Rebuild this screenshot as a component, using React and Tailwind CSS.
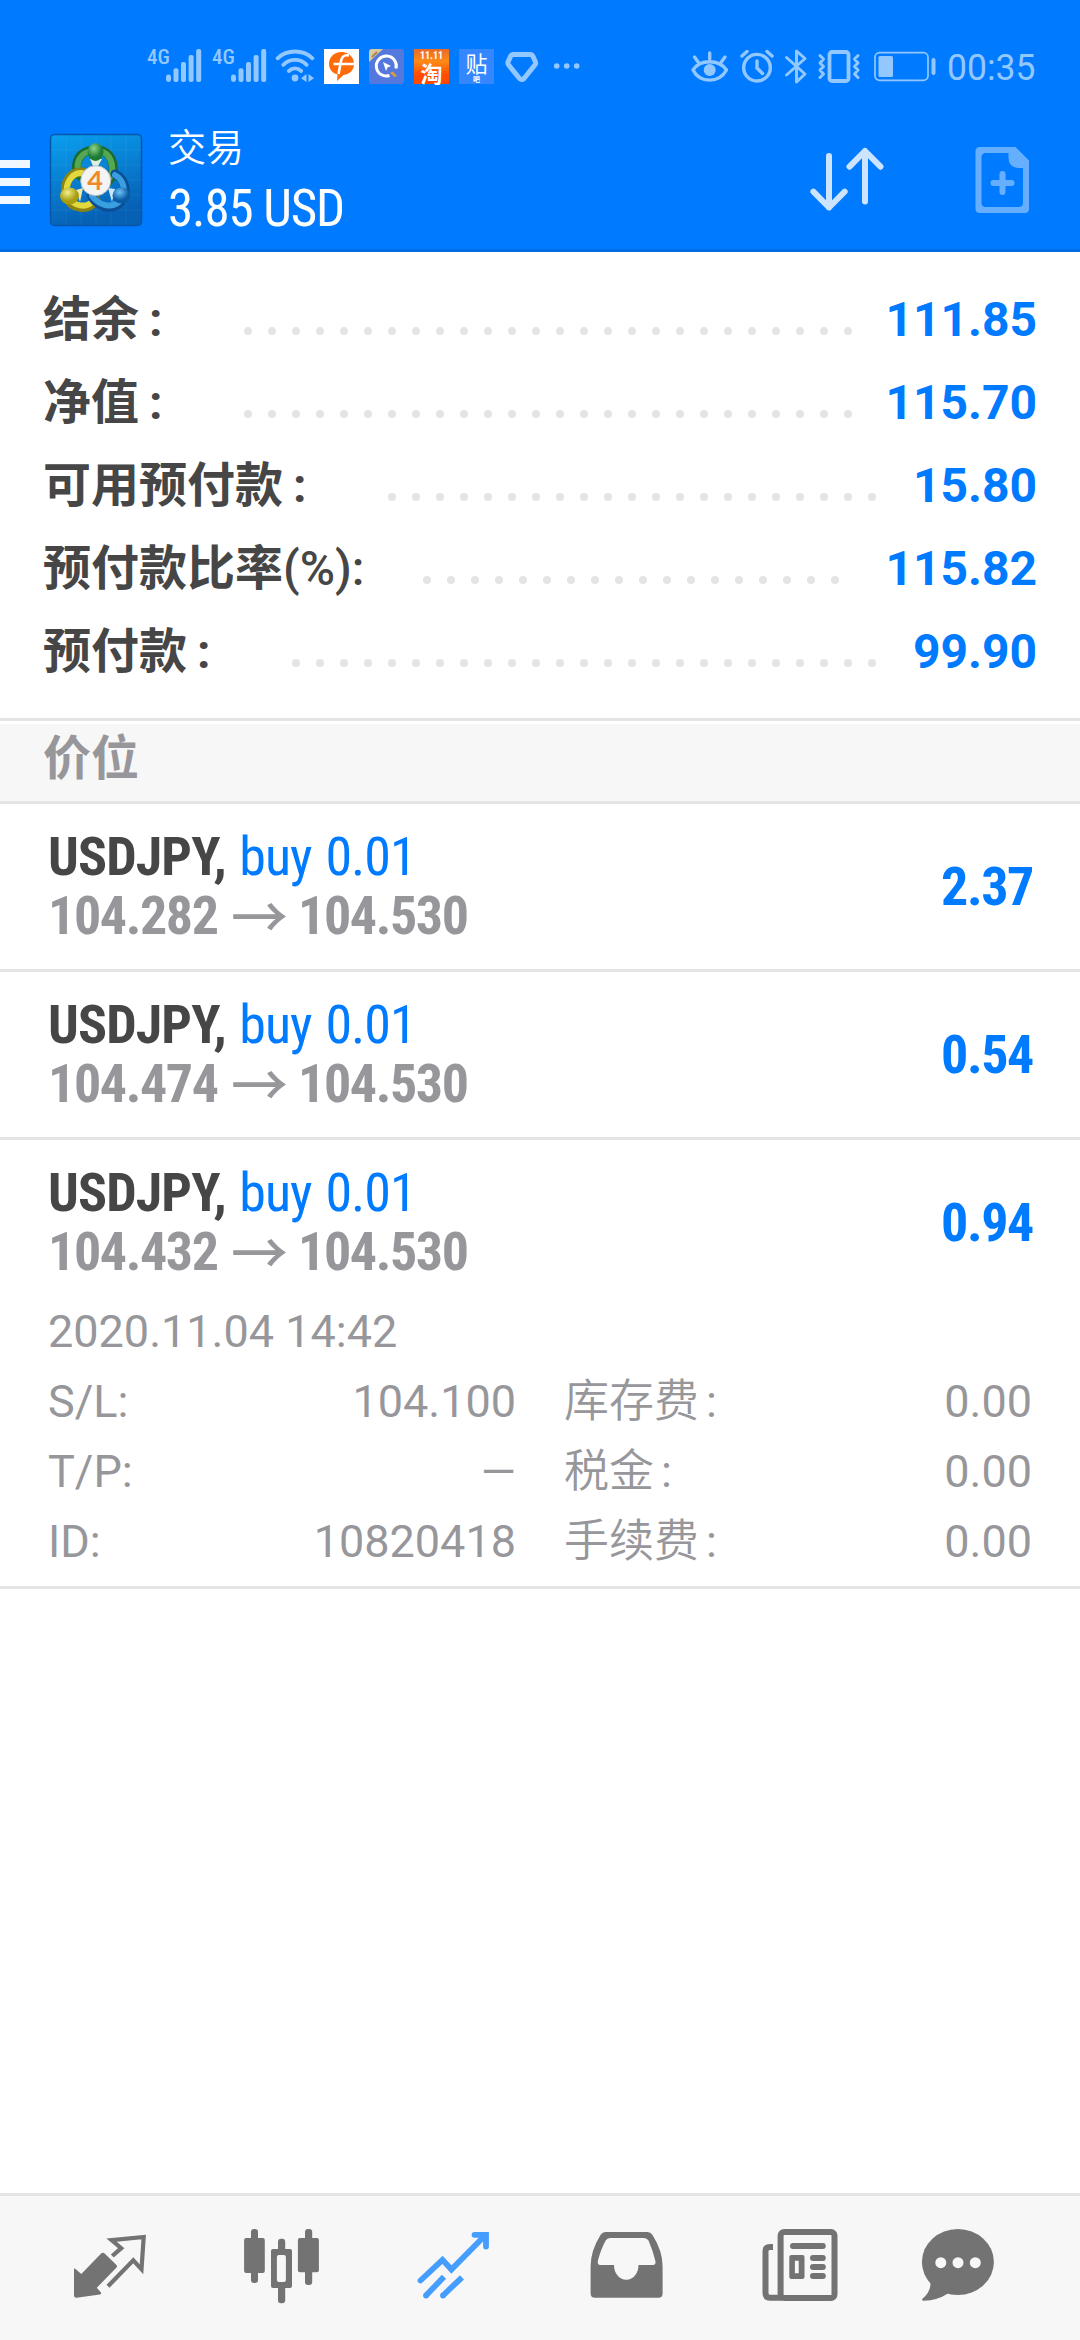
import React from "react";
import { clsx } from "clsx";

const account = [
  { label: "结余", wideColon: true, value: "111.85", dots: 26 },
  { label: "净值", wideColon: true, value: "115.70", dots: 26 },
  { label: "可用预付款", wideColon: true, value: "15.80", dots: 21 },
  { label: "预付款比率", suffix: "(%):", value: "115.82", dots: 18 },
  { label: "预付款", wideColon: true, value: "99.90", dots: 25 },
];

const positions = [
  { symbol: "USDJPY", side: "buy 0.01", open: "104.282", current: "104.530", profit: "2.37" },
  { symbol: "USDJPY", side: "buy 0.01", open: "104.474", current: "104.530", profit: "0.54" },
  {
    symbol: "USDJPY",
    side: "buy 0.01",
    open: "104.432",
    current: "104.530",
    profit: "0.94",
    time: "2020.11.04 14:42",
    details: [
      ["S/L:", "104.100", "库存费", "0.00"],
      ["T/P:", "—", "税金", "0.00"],
      ["ID:", "10820418", "手续费", "0.00"],
    ],
  },
];

function Signal({ className }) {
  return (
    <div className={clsx("flex h-11 shrink-0", className)}>
      <span className="w-[19px] pt-[2px] font-['Roboto_Condensed',Roboto,sans-serif] text-[21px] leading-[22px] font-medium">
        4G
      </span>
      <svg width="36" height="44" viewBox="0 0 36 44" fill="currentColor">
        <rect x="0" y="30.5" width="5" height="7.5" rx="2.4" />
        <rect x="7.5" y="24.3" width="5" height="13.7" rx="2" />
        <rect x="15" y="18" width="5" height="20" rx="2" />
        <rect x="22.6" y="11" width="5" height="27" rx="2" />
        <rect x="30.2" y="5" width="5" height="33" rx="2" />
      </svg>
    </div>
  );
}

function StatusBar() {
  return (
    <div className="flex h-28 items-start pt-11 text-[#93c8ff]">
      <Signal className="ml-[147px] w-[55px]" />
      <Signal className="ml-[10px] w-[55px]" />
      {/* wifi */}
      <svg className="ml-[8px] shrink-0" width="40" height="44" viewBox="0 0 40 44" fill="none" stroke="currentColor" strokeWidth="3.8" strokeLinecap="round">
        <path d="M2.6 14.3C12 5.2 28 5.2 37.4 14.3" />
        <path d="M8.3 20.8C15 14.2 25 14.2 31.7 20.8" />
        <path d="M13.8 27C17.5 23.6 22.5 23.6 26.2 27" />
        <circle cx="20" cy="34" r="3.4" fill="currentColor" stroke="none" />
        <path d="M31.5 30v8l-5.5-3.7zM33.5 30v8l5.5-3.7z" fill="currentColor" stroke="none" />
      </svg>
      {/* notification badges */}
      <svg className="ml-[9px] shrink-0" width="35" height="44" viewBox="0 0 35 44">
        <rect y="5" width="35" height="35" fill="#fff" />
        <path d="M17.5 8C10 8 5 13 5 20c0 5 3 9 8.500 10.5L13 37l6.5-6C26 30 30 26 30 20 30 13 25 8 17.5 8Z" fill="#ff6a0a" />
        <path d="M25 11.5C20 10.5 18 12.500 17 17L14.5 30M9.5 20H30" stroke="#fff" strokeWidth="2.6" fill="none" />
      </svg>
      <svg className="ml-[10px] shrink-0" width="35" height="44" viewBox="0 0 35 44">
        <rect y="5" width="35" height="35" rx="3" fill="#5478dd" />
        <path d="M3 5H14L0 18V8Q0 5 3 5Z" fill="#dcc9a4" />
        <path d="M3 13L8 8" stroke="#a8874a" strokeWidth="2" />
        <path d="M20.5 31.5A10 10 0 1 1 27 24.500" fill="none" stroke="#fff" strokeWidth="3" />
        <path d="M14 18L22 22L18.5 23.5L17 27Z" fill="#fff" />
        <path d="M21 29L24 27.5L28 32L25.5 33Z" fill="#dc9b45" />
      </svg>
      <div className="mt-[5px] ml-[10px] h-[35px] w-[35px] shrink-0 bg-[linear-gradient(#e8692c,#ff8b16_35%,#ff4a00_75%)] text-center font-['Noto_Sans_CJK_SC',sans-serif] font-bold text-white">
        <div className="h-[12px] font-['Roboto_Condensed',sans-serif] text-[10px] leading-[13px]">11.11</div>
        <div className="text-[22px] leading-[22px]">淘</div>
      </div>
      <div className="mt-[5px] ml-[10px] h-[35px] w-[35px] shrink-0 bg-[#3587ff] text-center font-['Noto_Sans_CJK_SC',sans-serif] text-white">
        <div className="h-[26px] text-[22px] leading-[26px]">贴</div>
        <div className="text-[7px] leading-[8px] font-bold">吧</div>
      </div>
      <svg className="ml-[11px] shrink-0" width="34" height="44" viewBox="0 0 34 44" fill="none" stroke="currentColor" strokeWidth="5" strokeLinejoin="round">
        <path d="M8 10.5H25.5Q27 10.5 27.8 12L30.5 18Q31 19.5 30 20.8L19 34.5Q16.7 36.5 14.5 34.5L3.5 20.8Q2.5 19.5 3 18L5.7 12Q6.5 10.5 8 10.5Z" />
      </svg>
      <svg className="ml-[14px] shrink-0" width="28" height="44" viewBox="0 0 28 44" fill="currentColor">
        <circle cx="3.7" cy="22" r="2.8" />
        <circle cx="13.7" cy="22" r="2.8" />
        <circle cx="23.7" cy="22" r="2.8" />
      </svg>
      {/* system indicators */}
      <svg className="ml-[110px] shrink-0" width="38" height="44" viewBox="0 0 38 44" fill="none" stroke="currentColor" strokeWidth="3.4" strokeLinecap="round">
        <path d="M2 26C9 15 28 15 35.5 26C28 39.5 9 39.5 2 26Z" strokeLinejoin="round" />
        <circle cx="18.7" cy="26" r="6" fill="currentColor" stroke="none" />
        <path d="M3.5 13L7.5 18.5M18.7 9V15M34 13L30 18.5" />
      </svg>
      <svg className="ml-[10px] shrink-0" width="36" height="44" viewBox="0 0 36 44" fill="none" stroke="currentColor" strokeWidth="3.4" strokeLinecap="round">
        <circle cx="18" cy="23.7" r="13.3" />
        <path d="M18 17V24L23.5 29.5M3 12L8 7.5M33 12L28 7.5" />
      </svg>
      <svg className="ml-[9px] shrink-0" width="24" height="44" viewBox="0 0 24 44" fill="none" stroke="currentColor" strokeWidth="3" strokeLinecap="round" strokeLinejoin="round">
        <path d="M2.5 13.5L21 30L12.5 38V7L21 14.5L2.5 31" />
      </svg>
      <svg className="ml-[9px] shrink-0" width="44" height="44" viewBox="0 0 44 44" fill="none" stroke="currentColor" strokeWidth="3.8" strokeLinecap="round" strokeLinejoin="round">
        <rect x="12.5" y="8" width="19" height="29" rx="2.5" />
        <path strokeWidth="3" d="M3 11.5L6.5 15L3 19L6.5 22.5L3 26L6.5 30L3 33.5M41 11.5L37.5 15L41 19L37.5 22.5L41 26L37.5 30L41 33.5" />
      </svg>
      <svg className="ml-[12px] shrink-0" width="64" height="44" viewBox="0 0 64 44">
        <rect x="2" y="8.7" width="53" height="27.6" rx="4.5" fill="none" stroke="currentColor" strokeWidth="1.7" />
        <rect x="5.5" y="12" width="14.5" height="21" rx="1.5" fill="currentColor" />
        <rect x="58.5" y="14" width="4" height="17" rx="2" fill="currentColor" />
      </svg>
      <span className="ml-[10px] w-[92px] shrink-0 origin-left scale-x-[0.96] font-[Roboto,sans-serif] text-[37px] leading-[47px] whitespace-nowrap">
        00:35
      </span>
    </div>
  );
}

function AppLogo() {
  return (
    <svg width="94" height="94" viewBox="-1 -1 94 94" className="shrink-0">
      <defs>
        <linearGradient id="tile" x1="0" y1="0" x2="0.3" y2="1">
          <stop offset="0" stopColor="#0a9ff0" />
          <stop offset="1" stopColor="#0660b4" />
        </linearGradient>
        <radialGradient id="green" cx="0.4" cy="0.3">
          <stop offset="0" stopColor="#8fd68a" />
          <stop offset="1" stopColor="#1d7a35" />
        </radialGradient>
        <radialGradient id="yellow" cx="0.4" cy="0.3">
          <stop offset="0" stopColor="#f3ef8a" />
          <stop offset="1" stopColor="#a79c10" />
        </radialGradient>
        <radialGradient id="blue" cx="0.4" cy="0.3">
          <stop offset="0" stopColor="#6cc4f4" />
          <stop offset="1" stopColor="#0b5aa4" />
        </radialGradient>
      </defs>
      <rect x="0.5" y="0.5" width="91" height="91" rx="4" fill="url(#tile)" stroke="#0556a8" strokeWidth="1.5" />
      <path d="M16 0V92M31 0V92M46 0V92M61 0V92M76 0V92M0 16H92M0 31H92M0 46H92M0 61H92M0 76H92" stroke="#fff" strokeOpacity="0.06" />
      <g fill="none" strokeLinecap="round">
        <path d="M30 42C23 34 27 20 38 17H53C64 22 67 38 58 48" stroke="#1c6b2c" strokeWidth="9" />
        <path d="M30 40C25 33 28 21 38 18H53C62 22 66 37 58 46" stroke="#55a852" strokeWidth="6" />
        <path d="M33 38C21 37 13 48 16 62C22 76 38 77 46 66" stroke="#8b8410" strokeWidth="9" />
        <path d="M32 39C22 38 15 49 17 61C23 73 37 75 44 66" stroke="#e0d83c" strokeWidth="6" />
        <path d="M65 40C75 45 79 58 71 68C60 79 46 71 41 61" stroke="#0c4f97" strokeWidth="9" />
        <path d="M65 41C74 46 77 58 70 67C60 76 48 70 42 62" stroke="#3a9fe0" strokeWidth="6" />
      </g>
      <path d="M40 25H52L48 32H43Z" fill="#dff0df" />
      <path d="M26 56L33 54L30 68Z" fill="#eee9b0" />
      <path d="M58 54L65 55L62 68Z" fill="#cbe6fa" />
      <ellipse cx="45.5" cy="18" rx="8" ry="9" fill="url(#green)" />
      <ellipse cx="19.5" cy="62" rx="9.5" ry="8.5" fill="url(#yellow)" />
      <ellipse cx="71.5" cy="61.5" rx="9" ry="8" fill="url(#blue)" />
      <circle cx="45.7" cy="46.7" r="15" fill="#f4f4f4" stroke="#b9bcc0" strokeWidth="1" />
      <text x="45.2" y="55.8" textAnchor="middle" fontSize="27" fontWeight="bold" fontFamily="Lato, sans-serif" fill="#f08a28">
        4
      </text>
    </svg>
  );
}

function Header() {
  return (
    <div className="flex h-[140px] items-center border-b-[3px] border-[#026de2] pb-px">
      <div className="flex w-[30px] shrink-0 flex-col gap-[10px] pt-1">
        <div className="h-2 bg-[#f0f7ff]" />
        <div className="h-2 bg-[#f0f7ff]" />
        <div className="h-2 bg-[#f0f7ff]" />
      </div>
      <div className="ml-[19px]">
        <AppLogo />
      </div>
      <div className="ml-[25px] flex flex-col text-white">
        <div className="mt-[-3px] h-[61px] font-['Noto_Sans_CJK_SC',sans-serif] text-[38px] leading-[58px] font-[350]">交易</div>
        <div className="font-['Roboto_Condensed',Roboto,sans-serif] text-[51px] leading-[64px] tracking-[-1.1px] whitespace-nowrap">
          3.85 USD
        </div>
      </div>
      <svg className="ml-auto" width="80" height="72" viewBox="0 0 80 72" fill="none" stroke="#cce4ff" strokeWidth="6" strokeLinecap="round" strokeLinejoin="round">
        <path d="M22 12V63.5M6.4 47.7L22 63.5L37.7 47.7" />
        <path d="M58 57.5V7M42.5 22.7L58 7L73.5 22.7" />
      </svg>
      <svg className="mr-[46px] ml-[84px]" width="63" height="72" viewBox="0 0 63 72">
        <path
          fillRule="evenodd"
          fill="#66afff"
          d="M9 3H44.5L58 16.5V65Q58 69 54 69H9Q4.5 69 4.5 65V7.5Q4.5 3 9 3ZM15 9Q10.5 9 10.5 13.5V58.5Q10.5 63 15 63H47.5Q52 63 52 58.5V24H47Q37.5 23 37.5 14V9Z"
        />
        <path d="M22.5 39H40.5M31.5 30V48" stroke="#66afff" strokeWidth="6" strokeLinecap="round" />
      </svg>
    </div>
  );
}

function AccountRow({ label, suffix, wideColon, value, dots }) {
  return (
    <div className="flex h-[83px] items-center px-[43px] font-[Roboto,'Noto_Sans_CJK_SC',sans-serif] text-[48px] leading-[83px]">
      <span className="flex whitespace-nowrap text-[#464646]">
        <span className="font-bold">{label}</span>
        {suffix && <span className="w-[83px] font-medium">{suffix}</span>}
        {wideColon && <span className="w-[48px] pl-[10px] font-bold">:</span>}
      </span>
      <span className="mt-[23px] ml-[57px] flex gap-4">
        {Array.from({ length: dots }, (_, i) => (
          <i key={i} className="h-2 w-2 rounded-full bg-[#e4e4e4]" />
        ))}
      </span>
      <span className="ml-auto font-bold text-[#007aff]">{value}</span>
    </div>
  );
}

function Position({ item }) {
  return (
    <div className="border-b-[3px] border-[#e4e4e4] px-12 pt-[23px]">
      <div className="flex h-[142px] justify-between font-['Roboto_Condensed',Roboto,sans-serif] text-[54px] leading-[59px] tracking-[-1.4px]">
        <div className="flex flex-col whitespace-nowrap">
          <div className="h-[59px] [word-spacing:2.5px]">
            <span className="font-bold tracking-[-0.9px] text-[#464646]">{item.symbol},</span>{" "}
            <span className="tracking-[-1px] text-[#007aff]">{item.side}</span>
          </div>
          <div className="flex h-[59px] font-bold text-[#97979b]">
            <span className="w-[183px]">{item.open}</span>
            <span className="w-[67px] font-['Noto_Sans_CJK_SC',sans-serif] text-[57px] leading-[54px] font-medium">→</span>
            <span>{item.current}</span>
          </div>
        </div>
        <div className="mr-[-1px] pt-[30px] font-bold text-[#007aff]">{item.profit}</div>
      </div>
      {item.details && (
        <div className="mt-[-8px] pb-[9px] font-[Roboto,'Noto_Sans_CJK_SC',sans-serif] text-[45px] leading-[70px] text-[#97979b]">
          <div className="h-[70px]">{item.time}</div>
          {item.details.map(([k1, v1, k2, v2]) => (
            <div key={k1} className="flex h-[70px]">
              <div className="flex w-[468px] justify-between">
                <span>{k1}</span>
                <span>{v1}</span>
              </div>
              <div className="ml-12 flex flex-1 justify-between">
                <span>
                  <span className="font-[350]">{k2}</span>
                  <span className="ml-[7px]">:</span>
                </span>
                <span>{v2}</span>
              </div>
            </div>
          ))}
        </div>
      )}
    </div>
  );
}

function TabIcon({ className, children }) {
  return (
    <svg className={clsx("shrink-0", className)} width="80" height="80" viewBox="0 0 80 80">
      {children}
    </svg>
  );
}

function TabBar() {
  return (
    <div className="mt-auto flex h-[147px] border-t-[3px] border-[#e4e4e4] bg-[#f7f7f7] pt-[29px] text-[#737373]">
      {/* quotes */}
      <TabIcon className="ml-[70px]">
        <path fill="currentColor" d="M4 43.7Q4.5 43 5.5 44L11.3 49L30.9 28.7Q33 27 34.9 28.7L46.5 40Q47.6 41.3 46.5 42.5L26.8 62.7L31 67.5Q31.6 69 30 69.5L6.5 72.7Q4 72.8 4 70.5Z" />
        <path fill="none" stroke="currentColor" strokeWidth="4.2" d="M42.3 31L51.2 23.2L41.6 15.2L73.7 12L71.5 44.3L63.3 35.3L38 61.3" />
      </TabIcon>
      {/* chart */}
      <TabIcon className="ml-[91px]">
        <g fill="currentColor">
          <rect x="3.1" y="13" width="20.7" height="35" rx="2" />
          <rect x="10" y="4" width="7" height="54" rx="3" />
          <rect x="56.9" y="13" width="21" height="34.3" rx="2" />
          <rect x="64" y="4" width="7.2" height="56" rx="3" />
          <rect x="37" y="13.7" width="7.2" height="64.5" rx="3" />
          <rect x="30" y="24" width="21" height="39" rx="2" />
        </g>
        <rect x="35.9" y="30" width="9" height="27" rx="2" fill="#f7f7f7" />
      </TabIcon>
      {/* trade, the active tab */}
      <TabIcon className="ml-[92px] text-[#459dfd]">
        <g fill="none" stroke="currentColor" strokeWidth="5.8">
          <path strokeLinecap="round" d="M7.5 55.5L29.5 34.8L38.4 44.5L72.5 10M61.5 9.8H73V21.5" />
          <path d="M13 70.5L31 51.7M30 70.5L49 52.3" />
        </g>
        <circle cx="13" cy="70.5" r="2.9" fill="currentColor" />
        <circle cx="30" cy="70.5" r="2.9" fill="currentColor" />
      </TabIcon>
      {/* history */}
      <TabIcon className="ml-[93px]">
        <path
          fill="currentColor"
          fillRule="evenodd"
          d="M20 7H61.5Q64.5 7 66.5 10Q76.6 26 76.6 41V68.5Q76.6 72.7 72.5 72.7H9Q4.6 72.7 4.6 68.5V41Q4.6 26 14.5 10Q16.5 7 20 7ZM24 13Q21 13 19.7 15.5Q15 24 11.9 35.5Q11.2 40 14 40H28C28 48 33 54.7 40.3 54.7S52.5 48 52.5 40H67Q70 40 69.4 36Q67 26 62.5 15.5Q61 13 58 13Z"
        />
      </TabIcon>
      {/* news */}
      <TabIcon className="ml-[94px]">
        <g fill="none" stroke="currentColor" strokeWidth="6">
          <rect x="20.6" y="7" width="53.9" height="66" rx="3.5" />
          <path d="M13 22H10Q5.5 22 5.5 26V68Q5.5 72.7 10 72.7H22" />
        </g>
        <g fill="currentColor">
          <rect x="30" y="18" width="35.8" height="6" rx="3" />
          <path fillRule="evenodd" d="M31.3 30H42.5Q44.5 30 44.5 32V52Q44.5 54 42.5 54H31.3Q29.3 54 29.3 52V32Q29.3 30 31.3 30ZM34.9 35.7V48.3H38.7V35.7Z" />
          <rect x="50" y="30" width="15.8" height="6" rx="3" />
          <rect x="50" y="39" width="15.8" height="6" rx="3" />
          <rect x="50" y="48" width="15.8" height="6" rx="3" />
        </g>
      </TabIcon>
      {/* messages */}
      <TabIcon className="ml-[77px]">
        <g fill="currentColor">
          <ellipse cx="40.9" cy="37" rx="36" ry="33" />
          <path d="M13.5 58.5Q13.5 67 5.7 73.5Q4 75.7 7 75.7Q20 75.5 31 68.5L22 52L10 52Z" />
        </g>
        <g fill="#f7f7f7">
          <circle cx="23.8" cy="37.7" r="5.5" />
          <circle cx="41" cy="37.7" r="5.5" />
          <circle cx="58.3" cy="37.7" r="5.5" />
        </g>
      </TabIcon>
    </div>
  );
}

function App() {
  return (
    <div className="flex h-[2340px] w-[1080px] flex-col overflow-hidden bg-white">
      <div className="bg-[#007aff]">
        <StatusBar />
        <Header />
      </div>
      <div className="pt-[26px] pb-[25px]">
        {account.map((row) => (
          <AccountRow key={row.label + row.value} {...row} />
        ))}
      </div>
      <div className="border-y-[3px] border-[#e4e4e4] pt-[3px]">
        <div className="h-[77px] bg-[#f7f7f7] pl-[43px] font-[Roboto,'Noto_Sans_CJK_SC',sans-serif] text-[48px] leading-[70px] font-bold text-[#97979b]">
          价位
        </div>
      </div>
      {positions.map((item) => (
        <Position key={item.open} item={item} />
      ))}
      <TabBar />
    </div>
  );
}

export default App;
